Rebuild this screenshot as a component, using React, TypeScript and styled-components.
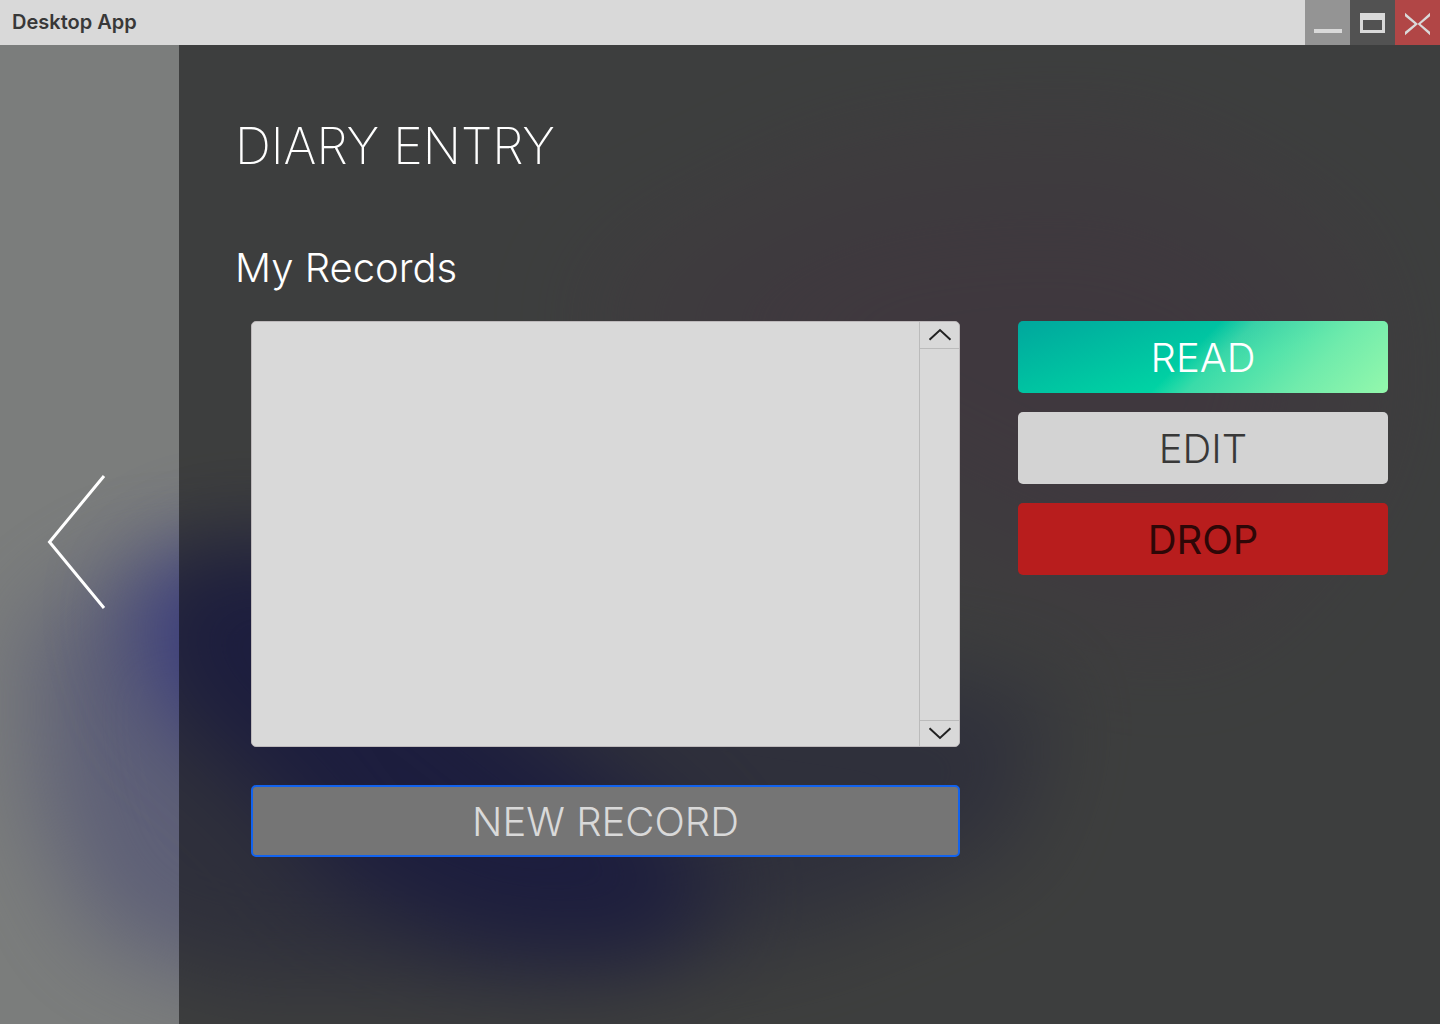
import React from "react";
import styled, { createGlobalStyle } from "styled-components";

const GlobalStyle = createGlobalStyle`
  *, *::before, *::after { box-sizing: border-box; }
  body {
    margin: 0;
    background: #3d3e3d;
    font-family: Inter, "Liberation Sans", sans-serif;
  }
  h1, h2 { margin: 0; }
  button {
    margin: 0;
    padding: 0;
    border: 0;
    font-family: inherit;
    cursor: pointer;
  }
`;

const Window = styled.div`
  display: grid;
  grid-template-rows: 45px 1fr;
  grid-template-columns: minmax(0, 1fr);
  min-height: 100vh;
`;

const TitleBar = styled.header`
  display: flex;
  justify-content: space-between;
  background: #d9d9d9;
`;

const AppName = styled.span`
  padding-left: 12px;
  font-size: 20px;
  font-weight: 600;
  line-height: 44px;
  color: #383838;
`;

const WindowControls = styled.div`
  display: flex;
`;

const WindowButton = styled.button<{ $color: string }>`
  width: 45px;
  height: 45px;
  background: ${({ $color }) => $color};

  svg { display: block; }
`;

const Body = styled.div`
  display: grid;
  grid-template-columns: 179px minmax(0, 1fr);
  background: #7b7d7c;
`;

const Backdrop = styled.svg`
  grid-area: 1 / 1 / 2 / 3;
  width: 100%;
  height: 100%;
  min-height: 0;
  contain: size;
`;

const Sidebar = styled.nav`
  grid-area: 1 / 1;
  z-index: 1;
  display: flex;
  align-items: center;
  justify-content: center;
  padding-top: 14px;
`;

const BackButton = styled.button`
  width: 64px;
  height: 140px;
  margin-right: 27px;
  background: transparent;

  svg { display: block; }
`;

const Main = styled.main`
  grid-area: 1 / 2;
  z-index: 1;
  padding: 70px 52px 64px 56px;
  background: rgba(0, 0, 0, 0.5);
`;

const PageTitle = styled.h1`
  font-size: 50px;
  font-weight: 200;
  line-height: 62px;
  color: #fff;
`;

const SectionTitle = styled.h2`
  margin-top: 64px;
  font-size: 40px;
  font-weight: 300;
  line-height: 54px;
  color: #fff;
`;

const Records = styled.div`
  display: grid;
  grid-template-columns: minmax(0, 1fr) 370px;
  column-gap: 58px;
  margin-top: 26px;
  padding-left: 16px;
`;

const RecordsColumn = styled.div`
  display: flex;
  flex-direction: column;
  gap: 38px;
`;

const ActionsColumn = styled.div`
  display: flex;
  flex-direction: column;
  gap: 19px;
`;

const ListBox = styled.div`
  display: flex;
  height: 426px;
  overflow: hidden;
  border: 1px solid #bdb9bb;
  border-radius: 5px;
  background: #d9d9d9;
`;

const RecordList = styled.div`
  flex: 1;
`;

const ScrollBar = styled.div`
  display: flex;
  flex-direction: column;
  justify-content: space-between;
  width: 40px;
  border-left: 1px solid #bbb;
`;

const ScrollButton = styled.button<{ $edge: "top" | "bottom" }>`
  height: ${({ $edge }) => ($edge === "top" ? 27 : 26)}px;
  background: transparent;
  border-${({ $edge }) => ($edge === "top" ? "bottom" : "top")}: 1px solid #bbb;

  svg { display: block; margin: 0 auto; }
`;

const ActionButton = styled.button<{
  $background: string;
  $color: string;
  $weight?: number;
  $outline?: string;
}>`
  height: 72px;
  padding-top: 2px;
  border: ${({ $outline }) => ($outline ? `2px solid ${$outline}` : "0")};
  border-radius: 5px;
  background: ${({ $background }) => $background};
  color: ${({ $color }) => $color};
  font-size: 40px;
  font-weight: ${({ $weight }) => $weight ?? 300};
  line-height: 48px;
`;

const readBackground = [
  "linear-gradient(135deg, rgba(190, 235, 180, 0) 46%, rgba(190, 235, 180, 0.3) 54%, rgba(160, 245, 175, 0.7) 78%, rgb(148, 248, 172) 100%)",
  "linear-gradient(162deg, #00a79d 0%, #00d4a4 60%)",
].join(", ");

function Glow() {
  return (
    <Backdrop viewBox="0 0 1440 979" preserveAspectRatio="none" aria-hidden="true">
      <defs>
        <filter id="wide" x="-50%" y="-50%" width="200%" height="200%" colorInterpolationFilters="sRGB">
          <feGaussianBlur stdDeviation="70" />
        </filter>
        <filter id="soft" x="-50%" y="-50%" width="200%" height="200%" colorInterpolationFilters="sRGB">
          <feGaussianBlur stdDeviation="46" />
        </filter>
        <filter id="core" x="-50%" y="-50%" width="200%" height="200%" colorInterpolationFilters="sRGB">
          <feGaussianBlur stdDeviation="46" />
        </filter>
      </defs>
      <path
        d="M580 270 L860 130 L1130 110 L1340 220 L1350 400 L1200 580 L1020 520 L820 420 Z"
        fill="#806b7d"
        opacity="0.65"
        filter="url(#wide)"
      />
      <path
        d="M30 590 L130 520 L300 520 L700 600 L1050 650 L1010 800 L820 880 L560 935 L240 940 L100 890 L40 760 Z"
        fill="#595b76"
        opacity="0.85"
        filter="url(#soft)"
      />
      <path
        d="M130 550 L200 500 L320 500 L480 640 L680 790 L720 860 L640 915 L480 905 L340 840 L260 740 L170 670 Z"
        fill="#33357d"
        opacity="0.85"
        filter="url(#core)"
      />
    </Backdrop>
  );
}

export default function App() {
  return (
    <>
      <GlobalStyle />
      <Window>
        <TitleBar>
          <AppName>Desktop App</AppName>
          <WindowControls>
            <WindowButton $color="#949494" aria-label="Minimize">
              <svg width="45" height="45" viewBox="0 0 45 45">
                <path d="M9 29h28v4H9z" fill="#d9d9d9" />
              </svg>
            </WindowButton>
            <WindowButton $color="#525252" aria-label="Maximize">
              <svg width="45" height="45" viewBox="0 0 45 45">
                <path d="M10 13h25v20H10zM13 20v10h19V20z" fill="#d9d9d9" fillRule="evenodd" />
              </svg>
            </WindowButton>
            <WindowButton $color="#b14646" aria-label="Close">
              <svg width="45" height="45" viewBox="0 0 45 45" fill="#d9d9d9">
                <path d="M10 12.800L23 24L10 35.200V31.800L19.600 24L10 16.200Z" />
                <path d="M35 12.800L22.600 24L35 35.200V31.800L25.600 24L35 16.200Z" />
              </svg>
            </WindowButton>
          </WindowControls>
        </TitleBar>
        <Body>
          <Glow />
          <Sidebar aria-label="Navigation">
            <BackButton aria-label="Back">
              <svg width="64" height="140" viewBox="0 0 64 140" fill="none" stroke="#fff" strokeWidth="3">
                <path d="M60 4L5.500 70L60 136" />
              </svg>
            </BackButton>
          </Sidebar>
          <Main>
            <PageTitle>DIARY ENTRY</PageTitle>
            <SectionTitle id="records-title">My Records</SectionTitle>
            <Records>
              <RecordsColumn>
                <ListBox>
                  <RecordList role="listbox" aria-labelledby="records-title" tabIndex={0} />
                  <ScrollBar>
                    <ScrollButton $edge="top" aria-label="Scroll up">
                      <svg width="24" height="26" viewBox="0 0 24 26" fill="none" stroke="#222" strokeWidth="2">
                        <path d="M1.500 17.800L12 8L22.500 17.800" />
                      </svg>
                    </ScrollButton>
                    <ScrollButton $edge="bottom" aria-label="Scroll down">
                      <svg width="24" height="25" viewBox="0 0 24 25" fill="none" stroke="#222" strokeWidth="2">
                        <path d="M1.500 7.200L12 17L22.500 7.200" />
                      </svg>
                    </ScrollButton>
                  </ScrollBar>
                </ListBox>
                <ActionButton $background="#757575" $color="#d9d9d9" $outline="#1263ee">
                  NEW RECORD
                </ActionButton>
              </RecordsColumn>
              <ActionsColumn>
                <ActionButton $background={readBackground} $color="#fff">
                  READ
                </ActionButton>
                <ActionButton $background="#d3d3d3" $color="#383838">
                  EDIT
                </ActionButton>
                <ActionButton $background="#b81d1d" $color="#2e0707" $weight={400}>
                  DROP
                </ActionButton>
              </ActionsColumn>
            </Records>
          </Main>
        </Body>
      </Window>
    </>
  );
}
